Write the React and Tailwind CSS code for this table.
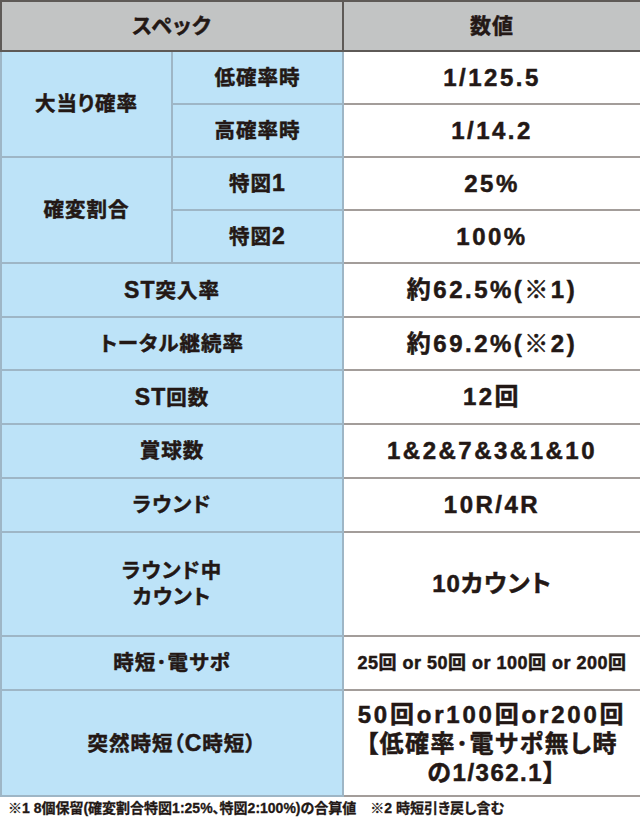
import React from "react";

const F = { fontFamily: '"Liberation Sans", "Noto Sans CJK JP", sans-serif' };

const L = "bg-[#bde3f8] border-2 border-[#9eb6c6] text-center align-middle text-[20.5px] font-bold leading-[26px] tracking-[1px] [font-feature-settings:'palt'] [-webkit-text-stroke:0.5px_#231815]";
const R = "bg-white border-2 border-[#a39d9a] border-l-[#5e5a57] text-center align-middle text-[24px] font-bold leading-[26px] tracking-[2.5px] [font-feature-settings:'palt'] [-webkit-text-stroke:0.5px_#231815]";
const D = "text-[23px]";

export default function App() {
  const rows = [
    [<><span className={D}>ST</span>突入率</>, "約62.5%(※1)", 54, "st"],
    ["トータル継続率", "約69.2%(※2)", 53, "tt"],
    [<><span className={D}>ST</span>回数</>, "12回", 54, "sc"],
    ["賞球数", "1&2&7&3&1&10", 54, "sh"],
    ["ラウンド", "10R/4R", 54, "rd"],
  ];
  return (
    <div className="w-[640px] h-[819px] bg-white text-[#231815]" style={F}>
      <table className="w-[640px] border-collapse table-fixed border-2 border-[#5e5a57]">
        <colgroup>
          <col className="w-[171px]" />
          <col className="w-[171px]" />
          <col className="w-[298px]" />
        </colgroup>
        <tbody>
          <tr className="h-[50px]">
            <td colSpan={2} className="bg-[#c2c4c4] border-2 border-[#5e5a57] text-center align-middle text-[21px] tracking-[1px] font-bold [font-feature-settings:'palt'] [-webkit-text-stroke:0.5px_#231815]">スペック</td>
            <td className="bg-[#c2c4c4] border-2 border-[#5e5a57] text-center align-middle text-[21px] tracking-[1px] font-bold [-webkit-text-stroke:0.5px_#231815]">数値</td>
          </tr>
          <tr className="h-[53px]">
            <td rowSpan={2} className={L}>大当り確率</td>
            <td className={L}>低確率時</td>
            <td className={R}>1/125.5</td>
          </tr>
          <tr className="h-[53px]">
            <td className={L}>高確率時</td>
            <td className={R}>1/14.2</td>
          </tr>
          <tr className="h-[53px]">
            <td rowSpan={2} className={L}>確変割合</td>
            <td className={L}>特図<span className={D}>1</span></td>
            <td className={R}>25%</td>
          </tr>
          <tr className="h-[53px]">
            <td className={L}>特図<span className={D}>2</span></td>
            <td className={R}>100%</td>
          </tr>
          {rows.map(([a, b, h, k]) => (
            <tr key={k} style={{ height: h }}>
              <td colSpan={2} className={L}>{a}</td>
              <td className={R}>{b}</td>
            </tr>
          ))}
          <tr className="h-[104px]">
            <td colSpan={2} className={L}>ラウンド中<br />カウント</td>
            <td className={R + " !tracking-[1px]"}>10カウント</td>
          </tr>
          <tr className="h-[54px]">
            <td colSpan={2} className={L}>時短･電サポ</td>
            <td className={R + " !text-[18px] !tracking-[0.5px] whitespace-nowrap"}>25回 or 50回 or 100回 or 200回</td>
          </tr>
          <tr className="h-[106px]">
            <td colSpan={2} className={L}>突然時短（<span className={D}>C</span>時短）</td>
            <td className={R + " !leading-[29px] !tracking-[1.5px] whitespace-nowrap"}><span className="tracking-[2.8px]">50回or100回or200回</span><br />【低確率･電サポ無し時<br />の1/362.1】</td>
          </tr>
        </tbody>
      </table>
      <div className="pl-[8px] pt-[2px] text-[14px] font-bold leading-[18px] whitespace-nowrap [font-feature-settings:'palt'] [-webkit-text-stroke:0.3px_#231815]">
        ※1 8個保留(確変割合特図1:25%、特図2:100%)の合算値　※2 時短引き戻し含む
      </div>
    </div>
  );
}
